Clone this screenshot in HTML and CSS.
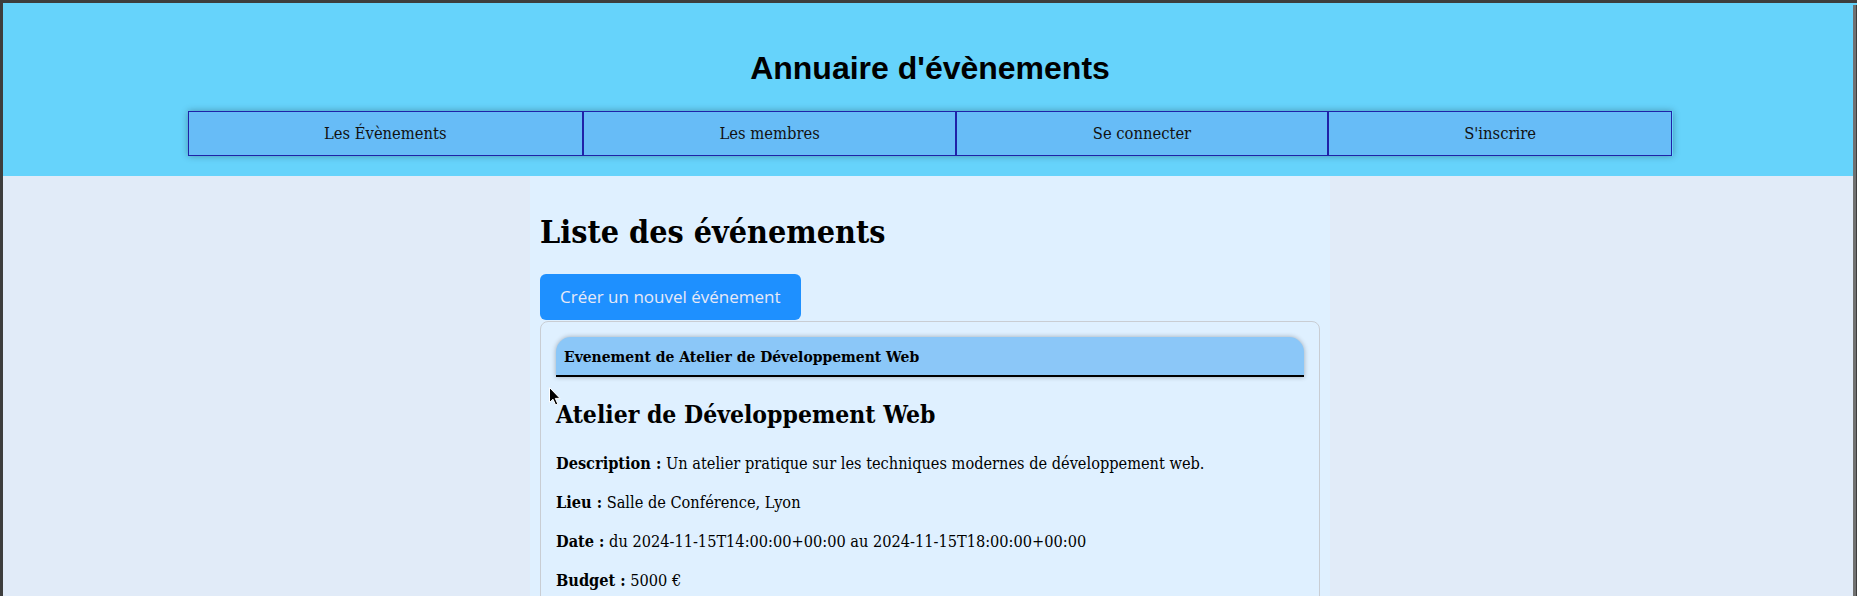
FILE: index.html
```html
<!DOCTYPE html>
<html lang="fr">
<head>
<meta charset="utf-8">
<title>Annuaire d'évènements</title>
<link rel="stylesheet" href="styles.css">
</head>
<body>
<div class="frame">
  <header class="site-header">
    <h1 class="site-title">Annuaire d'évènements</h1>
    <nav class="main-nav">
      <a class="nav-item" href="#">Les Évènements</a>
      <a class="nav-item" href="#">Les membres</a>
      <a class="nav-item" href="#">Se connecter</a>
      <a class="nav-item" href="#">S'inscrire</a>
    </nav>
  </header>
  <main class="content">
    <h1 class="page-title">Liste des événements</h1>
    <a class="btn-create" href="#">Créer un nouvel événement</a>
    <section class="event-card">
      <div class="event-card-header">Evenement de Atelier de Développement Web</div>
      <h2 class="event-title">Atelier de Développement Web</h2>
      <p class="event-line"><strong>Description :</strong> Un atelier pratique sur les techniques modernes de développement web.</p>
      <p class="event-line"><strong>Lieu :</strong> Salle de Conférence, Lyon</p>
      <p class="event-line"><strong>Date :</strong> du 2024-11-15T14:00:00+00:00 au 2024-11-15T18:00:00+00:00</p>
      <p class="event-line"><strong>Budget :</strong> 5000 €</p>
    </section>
  </main>
  <div class="scrollbar"></div>
  <svg class="cursor" width="12" height="19" viewBox="0 0 12 19"><path d="M0.5 0.5 L0.5 15.5 L4 12.2 L6.6 18 L8.8 17 L6.3 11.4 L11 11.4 Z" fill="#000" stroke="#fff" stroke-width="1"/></svg>
</div>
</body>
</html>
```
FILE: styles.css
```css
html, body {
  margin: 0;
  padding: 0;
  height: 100%;
  overflow: hidden;
  background: #3d3d3d;
}

.frame {
  position: relative;
  box-sizing: border-box;
  height: 596px;
  border-top: 3px solid #3d3d3d;
  border-left: 3px solid #3d3d3d;
  background: #e1ebf8;
  display: flex;
  flex-direction: column;
  overflow: hidden;
}

.scrollbar {
  position: absolute;
  top: 2px;
  right: 0;
  bottom: 0;
  width: 3px;
  background: #707070;
  border-right: 1px solid #3d3d3d;
}

.cursor {
  position: absolute;
  left: 546px;
  top: 384px;
}

.site-header {
  background: #66d3fb;
  padding: 47px 0 20px;
}

.site-title {
  margin: 0 0 24px;
  font: bold 32px/37px "Liberation Sans", Arial, sans-serif;
  text-align: center;
  color: #000;
}

.main-nav {
  display: flex;
  width: 1485px;
  margin: 0 auto;
  box-shadow: 0 0 7px rgba(0, 0, 0, 0.3);
}

.nav-item {
  flex: 1 1 auto;
  padding: 11px 0;
  line-height: 21px;
  border: 1px solid #1f22a8;
  background: #67bcf7;
  color: #111;
  text-align: center;
  text-decoration: none;
  font-family: "DejaVu Serif", serif;
  font-stretch: semi-condensed;
  font-size: 16.4px;
}

.content {
  flex: 1;
  width: 800px;
  box-sizing: border-box;
  margin: 0 auto;
  padding: 10px;
  background: #dff0ff;
  display: flex;
  flex-direction: column;
  align-items: flex-start;
  font-family: "DejaVu Serif", serif;
  font-stretch: semi-condensed;
}

.page-title {
  margin: 24px 0 20px;
  font-size: 32px;
  line-height: 44px;
  font-weight: bold;
  color: #000;
}

.btn-create {
  display: block;
  height: 46px;
  line-height: 46px;
  padding: 0 20px;
  border-radius: 6px;
  background: #1e90ff;
  color: #e6e9f7;
  text-decoration: none;
  font-family: "Open Sans", "Noto Sans", sans-serif;
  font-stretch: normal;
  font-size: 17px;
}

.event-card {
  align-self: stretch;
  margin-top: 1px;
  padding: 15px;
  border: 1px solid #c9cdd3;
  border-radius: 8px;
}

.event-card-header {
  padding: 9px 8px 7px;
  line-height: 22px;
  font-size: 15.5px;
  font-weight: bold;
  background: #8bc7f8;
  border-bottom: 2px solid #000;
  border-radius: 15px 15px 0 0;
  box-shadow: 0 0 5px rgba(0, 0, 0, 0.3);
}

.event-title {
  margin: 23px 0 22px;
  font-size: 24.5px;
  line-height: 30px;
  font-weight: bold;
}

.event-line {
  margin: 0 0 16px;
  font-size: 16.2px;
  line-height: 23px;
  color: #000;
}
```
